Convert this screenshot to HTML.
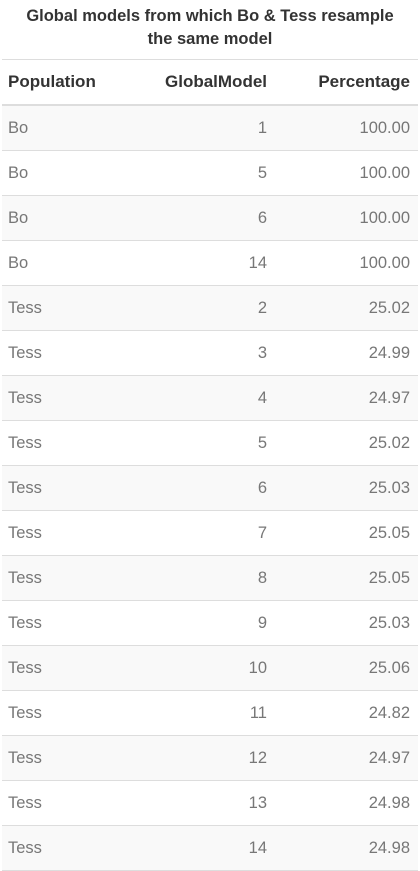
<!DOCTYPE html>
<html><head><style>
body{margin:0;background:#fff;font-family:"Liberation Sans",sans-serif;width:420px;overflow:hidden}
.t{text-align:center;font-weight:bold;font-size:16.5px;color:#333;line-height:23px;padding-top:5px;height:54px;}
table{border-collapse:collapse;width:416px;margin-left:2px;border-top:1px solid #ddd}
th{font-size:17px;color:#333;height:44px;border-bottom:2px solid #ddd;padding:0 8px 0 6px;font-weight:bold}
td{font-size:16.5px;color:#777;height:44px;border-bottom:1px solid #ddd;padding:0 8px 0 6px}
tr:nth-child(odd) td{background:#f9f9f9}
.r{text-align:right}.l{text-align:left}
</style></head><body>
<div class="t">Global models from which Bo &amp; Tess resample<br>the same model</div>
<table>
<thead><tr><th class="l" style="width:110px">Population</th><th class="r" style="width:135px">GlobalModel</th><th class="r">Percentage</th></tr></thead>
<tbody>
<tr><td>Bo</td><td class="r">1</td><td class="r">100.00</td></tr>
<tr><td>Bo</td><td class="r">5</td><td class="r">100.00</td></tr>
<tr><td>Bo</td><td class="r">6</td><td class="r">100.00</td></tr>
<tr><td>Bo</td><td class="r">14</td><td class="r">100.00</td></tr>
<tr><td>Tess</td><td class="r">2</td><td class="r">25.02</td></tr>
<tr><td>Tess</td><td class="r">3</td><td class="r">24.99</td></tr>
<tr><td>Tess</td><td class="r">4</td><td class="r">24.97</td></tr>
<tr><td>Tess</td><td class="r">5</td><td class="r">25.02</td></tr>
<tr><td>Tess</td><td class="r">6</td><td class="r">25.03</td></tr>
<tr><td>Tess</td><td class="r">7</td><td class="r">25.05</td></tr>
<tr><td>Tess</td><td class="r">8</td><td class="r">25.05</td></tr>
<tr><td>Tess</td><td class="r">9</td><td class="r">25.03</td></tr>
<tr><td>Tess</td><td class="r">10</td><td class="r">25.06</td></tr>
<tr><td>Tess</td><td class="r">11</td><td class="r">24.82</td></tr>
<tr><td>Tess</td><td class="r">12</td><td class="r">24.97</td></tr>
<tr><td>Tess</td><td class="r">13</td><td class="r">24.98</td></tr>
<tr><td>Tess</td><td class="r">14</td><td class="r">24.98</td></tr>
</tbody></table>
</body></html>
